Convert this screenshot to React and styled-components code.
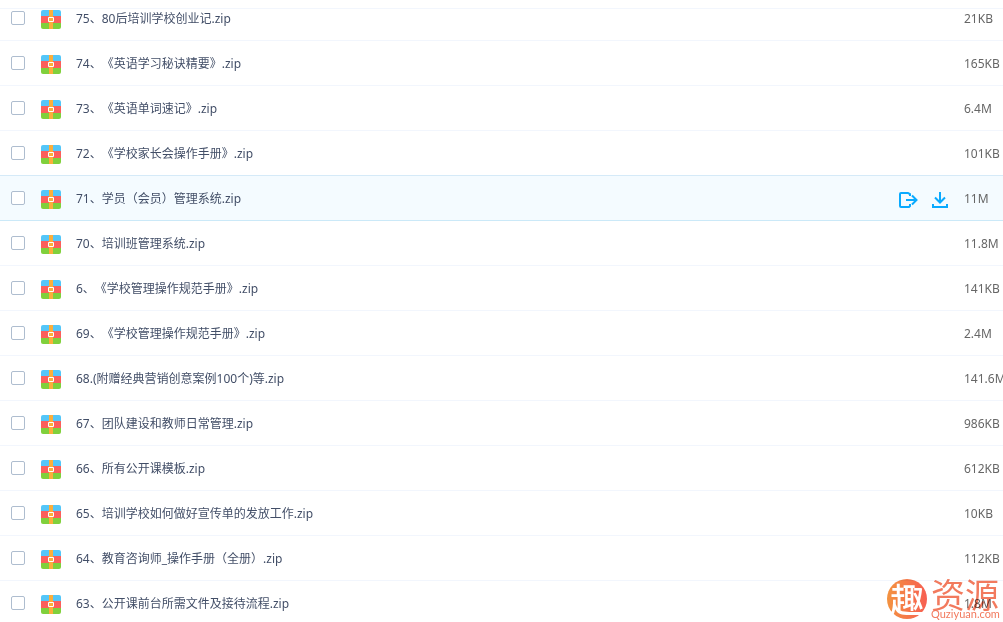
import React from "react";
import styled, { createGlobalStyle } from "styled-components";

const GlobalStyle = createGlobalStyle`
  * {
    box-sizing: border-box;
  }

  body {
    margin: 0;
    background-color: #fff;
    color: #424e67;
    font-family: "Noto Sans", "Noto Sans CJK SC", sans-serif;
    font-size: 12px;
    text-spacing-trim: space-all;
  }
`;

const Page = styled.main`
  position: relative;
  height: 100vh;
  overflow: hidden;
  background-color: #fff;
`;

const ListHead = styled.div`
  position: relative;
  z-index: 1;
  height: 9px;
  background-color: #fff;
  border-bottom: 1px solid #f2f6fd;
`;

const List = styled.ul`
  list-style: none;
  margin: -13px 0 0;
  padding: 0;
`;

const Row = styled.li`
  display: flex;
  align-items: center;
  height: 45px;
  padding-left: 11px;
  border-bottom: 1px solid ${(props) => (props.$active ? "#cbe9f8" : "#f2f6fd")};
  background-color: ${(props) => (props.$active ? "#f4fbff" : "transparent")};
  box-shadow: ${(props) => (props.$active ? "0 -1px 0 #d5eaf8" : "none")};
`;

const Checkbox = styled.input`
  appearance: none;
  flex: none;
  width: 14px;
  height: 14px;
  margin: 0 16px 0 0;
  border: 1px solid #aebdcf;
  border-radius: 2px;
  background-color: #fff;

  &:checked {
    background-color: #09aaff;
  }
`;

const Name = styled.label`
  flex: 1;
  display: flex;
  align-items: center;
  gap: 15px;
  min-width: 0;
  padding-top: 2px;
  line-height: 18px;
  white-space: nowrap;
`;

const ZipSvg = styled.svg`
  flex: none;
  width: 20px;
  height: 20px;
  margin-top: 2px;
`;

const Actions = styled.div`
  display: flex;
  gap: 12px;
  margin-right: 14px;
  padding-top: 4px;
`;

const ActionButton = styled.button`
  width: 20px;
  height: 20px;
  padding: 0;
  border: none;
  background: none;
  color: #09aaff;
  cursor: pointer;

  svg {
    display: block;
  }
`;

const Size = styled.span`
  flex: none;
  width: 39px;
  padding-top: 2px;
  line-height: 18px;
  color: #666;
  white-space: nowrap;
`;

// multiply keeps the file size readable underneath
const Watermark = styled.div`
  position: absolute;
  right: 4px;
  bottom: 3px;
  display: flex;
  align-items: center;
  gap: 4px;
  color: #f27a5e;
  mix-blend-mode: multiply;
  pointer-events: none;
`;

const Badge = styled.div`
  display: flex;
  align-items: center;
  justify-content: center;
  width: 40px;
  height: 40px;
  border-radius: 50%;
  background: linear-gradient(90deg, #f39340, #f75f52);
  color: #fff;
  font-family: "Noto Sans CJK SC", sans-serif;
  font-size: 34px;
  font-weight: 500;
  line-height: 40px;
`;

const Brand = styled.div`
  width: 68px;
  font-family: "Noto Sans CJK SC", sans-serif;
  font-size: 34px;
  line-height: 30px;
`;

const Domain = styled.div`
  width: 68px;
  font-family: Lato, sans-serif;
  font-size: 11px;
  line-height: 10px;
`;

const files = [
  { name: "75、80后培训学校创业记.zip", size: "21KB" },
  { name: "74、《英语学习秘诀精要》.zip", size: "165KB" },
  { name: "73、《英语单词速记》.zip", size: "6.4M" },
  { name: "72、《学校家长会操作手册》.zip", size: "101KB" },
  { name: "71、学员（会员）管理系统.zip", size: "11M", active: true },
  { name: "70、培训班管理系统.zip", size: "11.8M" },
  { name: "6、《学校管理操作规范手册》.zip", size: "141KB" },
  { name: "69、《学校管理操作规范手册》.zip", size: "2.4M" },
  { name: "68.(附赠经典营销创意案例100个)等.zip", size: "141.6M" },
  { name: "67、团队建设和教师日常管理.zip", size: "986KB" },
  { name: "66、所有公开课模板.zip", size: "612KB" },
  { name: "65、培训学校如何做好宣传单的发放工作.zip", size: "10KB" },
  { name: "64、教育咨询师_操作手册（全册）.zip", size: "112KB" },
  { name: "63、公开课前台所需文件及接待流程.zip", size: "1.8M" },
];

const ZipIcon = () => (
  <ZipSvg viewBox="0 0 20 20" aria-hidden="true">
    <path d="M2 0h16a2 2 0 0 1 2 2v4H0V2a2 2 0 0 1 2-2z" fill="#54c6f8" />
    <path d="M0 6h20v7H0z" fill="#fb5f5b" />
    <path d="M0 13h20v4a2 2 0 0 1-2 2H2a2 2 0 0 1-2-2z" fill="#80d03c" />
    <path d="M8 0h4v19H8z" fill="#fcae3b" />
    <path d="M7.5 7.5h5v4h-5z" fill="#fcae3b" stroke="#fff" />
  </ZipSvg>
);

const ShareIcon = () => (
  <svg width="20" height="20" viewBox="0 0 20 20" fill="none" stroke="currentColor" strokeWidth="2">
    <path d="M12 6V4l-2-1H3a1 1 0 0 0-1 1v12a1 1 0 0 0 1 1h8l1-1v-2" />
    <path d="M8 10h10M14 5.500l4.500 4.500-4.500 4.500" />
  </svg>
);

const DownloadIcon = () => (
  <svg width="20" height="20" viewBox="0 0 20 20" fill="none" stroke="currentColor" strokeWidth="2">
    <path d="M10 2v10M5 7.500l5 5 5-5" />
    <path d="M3 14v3h14v-3" />
  </svg>
);

const App = () => {
  return (
    <Page>
      <GlobalStyle />
      <ListHead />
      <List>
        {files.map((file, i) => (
          <Row key={file.name} $active={file.active}>
            <Checkbox type="checkbox" id={`file-${i}`} />
            <Name htmlFor={`file-${i}`}>
              <ZipIcon />
              <span>{file.name}</span>
            </Name>
            {file.active && (
              <Actions>
                <ActionButton type="button" aria-label="分享">
                  <ShareIcon />
                </ActionButton>
                <ActionButton type="button" aria-label="下载">
                  <DownloadIcon />
                </ActionButton>
              </Actions>
            )}
            <Size>{file.size}</Size>
          </Row>
        ))}
      </List>
      <Watermark>
        <Badge>趣</Badge>
        <div>
          <Brand>资源</Brand>
          <Domain>Quziyuan.com</Domain>
        </div>
      </Watermark>
    </Page>
  );
};

export default App;
